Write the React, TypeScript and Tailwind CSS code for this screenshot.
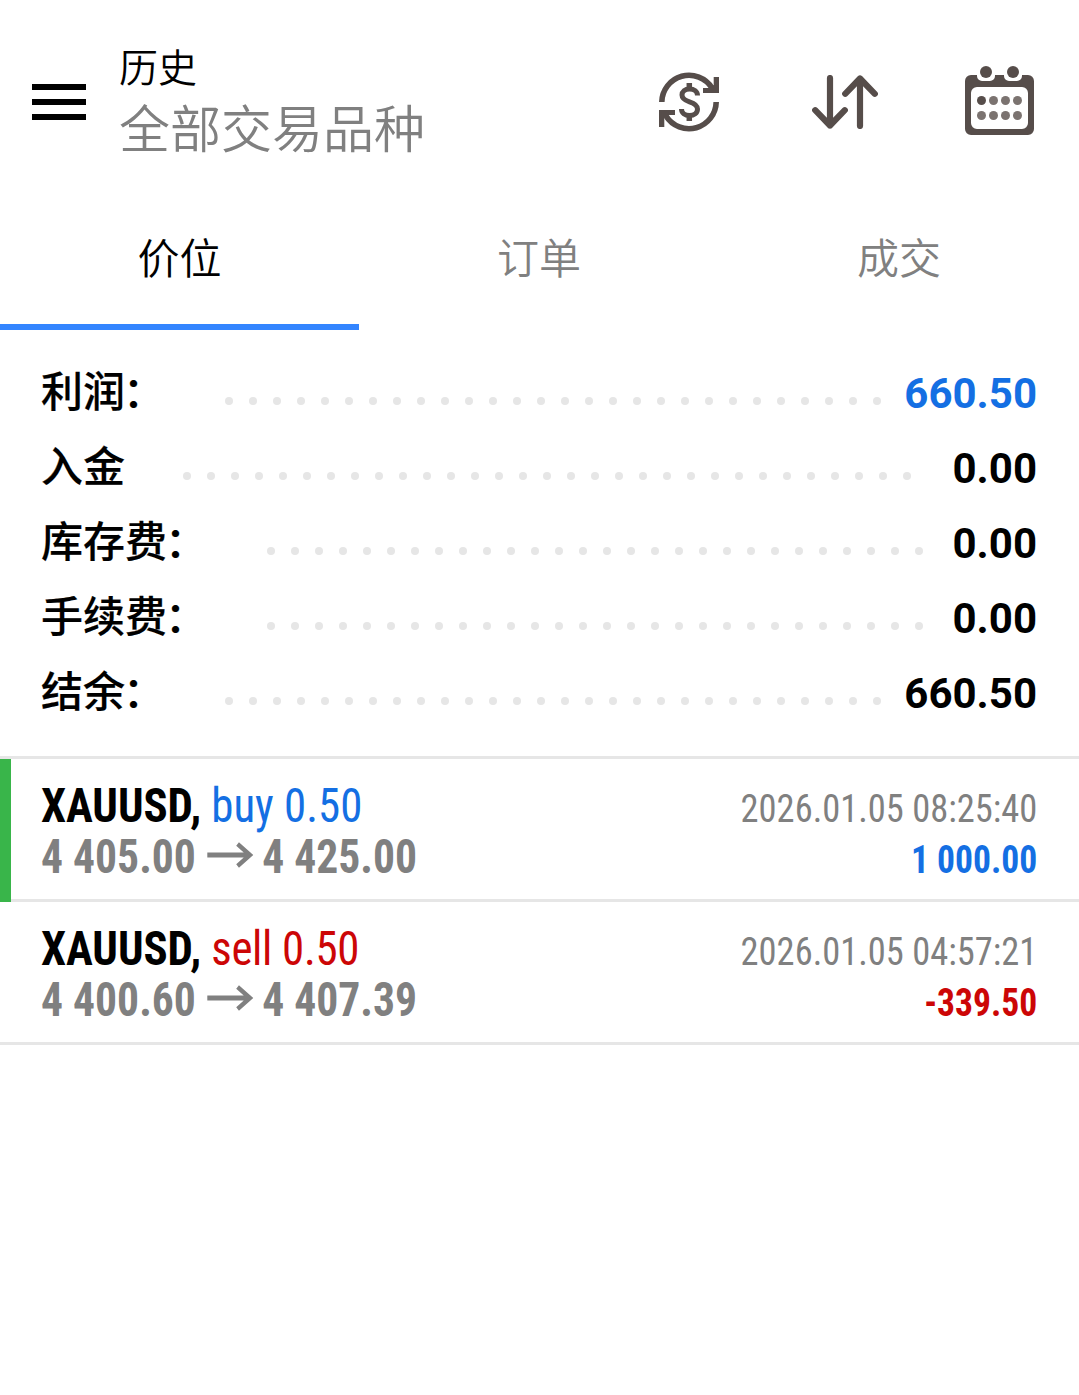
import type { ReactNode } from 'react';

interface Trade {
  id: number;
  symbol: string;
  side: 'buy' | 'sell';
  volume: string;
  open: string;
  close: string;
  time: string;
  profit: string;
  marked?: boolean;
}

const tabs = [
  { id: 'positions', label: '价位' },
  { id: 'orders', label: '订单' },
  { id: 'deals', label: '成交' },
];

const summary = [
  { label: '利润', colon: true, value: '660.50', highlight: true },
  { label: '入金', value: '0.00' },
  { label: '库存费', colon: true, value: '0.00' },
  { label: '手续费', colon: true, value: '0.00' },
  { label: '结余', colon: true, value: '660.50' },
];

const trades: Trade[] = [
  {
    id: 1,
    symbol: 'XAUUSD',
    side: 'buy',
    volume: '0.50',
    open: '4 405.00',
    close: '4 425.00',
    time: '2026.01.05 08:25:40',
    profit: '1 000.00',
    marked: true,
  },
  {
    id: 2,
    symbol: 'XAUUSD',
    side: 'sell',
    volume: '0.50',
    open: '4 400.60',
    close: '4 407.39',
    time: '2026.01.05 04:57:21',
    profit: '-339.50',
  },
];

const sideColors = {
  buy: 'text-[#146fe3]',
  sell: 'text-[#cc0606]',
};

const MenuIcon = () => (
  <svg width="54" height="36" viewBox="0 0 54 36" fill="#000">
    <path d="M0 0h54v6H0zM0 15h54v6H0zM0 30h54v6H0z" />
  </svg>
);

const CurrencyIcon = () => (
  <svg width="60" height="60" viewBox="0 0 60 60" fill="none" stroke="#564d4a">
    <path d="M2.800 30A27.200 27.200 0 0 1 53 16" strokeWidth="5.600" />
    <path d="M57.200 30A27.200 27.200 0 0 1 7 44" strokeWidth="5.600" />
    <path d="M60 5v16H44v-5h6l4.700-3V5zM0 55V38h16v5h-6l-4.700 3v9z" fill="#564d4a" stroke="none" />
    <path
      d="M38.500 23.500C38.500 19.500 35 17 30.500 17S23 19.500 23 23c0 4 3.500 5.500 7.500 6.800 4.500 1.400 8 3 8 7.200S35 43.500 30.500 43.500 22.500 41 22.500 37"
      strokeWidth="5"
    />
    <path d="M30.300 11v5M30.300 43v6" strokeWidth="5.500" />
  </svg>
);

const SortIcon = () => (
  <svg
    width="66"
    height="54"
    viewBox="0 0 66 54"
    fill="none"
    stroke="#564d4a"
    strokeWidth="6.200"
    strokeLinecap="round"
    strokeLinejoin="round"
  >
    <path d="M18 3v47.500M3.200 35.200L18 50.500l14.800-15.300" />
    <path d="M48 51V3.500M33.200 18.800L48 3.500l14.800 15.300" />
  </svg>
);

const CalendarIcon = () => (
  <svg width="69" height="69" viewBox="0 0 69 69" fill="#564d4a">
    <path
      fillRule="evenodd"
      d="M6 9h6v1a5 5 0 0 0 5 5h8a5 5 0 0 0 5-5V9h9v1a5 5 0 0 0 5 5h8a5 5 0 0 0 5-5V9h6a6 6 0 0 1 6 6v48a6 6 0 0 1-6 6H6a6 6 0 0 1-6-6V15a6 6 0 0 1 6-6zM12 21a6 6 0 0 0-6 6v30a6 6 0 0 0 6 6h45a6 6 0 0 0 6-6V27a6 6 0 0 0-6-6z"
    />
    <circle cx="21" cy="6" r="6" />
    <circle cx="48" cy="6" r="6" />
    <circle cx="16.500" cy="34.500" r="4.500" />
    <g fill="#7b7370">
      <circle cx="28.500" cy="34.500" r="4.500" />
      <circle cx="40.500" cy="34.500" r="4.500" />
      <circle cx="52.500" cy="34.500" r="4.500" />
      <circle cx="16.500" cy="49.500" r="4.500" />
      <circle cx="28.500" cy="49.500" r="4.500" />
      <circle cx="40.500" cy="49.500" r="4.500" />
      <circle cx="52.500" cy="49.500" r="4.500" />
    </g>
  </svg>
);

const ArrowIcon = () => (
  <svg className="mr-2.5 mb-1 ml-3" width="51" height="26" viewBox="0 0 51 26" fill="none" stroke="#808080" strokeWidth="4.800">
    <path d="M0 13h48M33.500 2L47 13 33.500 24" />
  </svg>
);

const IconButton = ({ label, children }: { label: string; children: ReactNode }) => (
  <button aria-label={label} className="block">
    {children}
  </button>
);

// Only whole dots are shown, the ones that do not fit wrap out of sight
const DotLeader = () => (
  <div className="mt-4 mr-[23px] ml-[57px] flex h-2 flex-1 flex-wrap gap-4 overflow-hidden">
    {Array.from({ length: 34 }, (_, i) => (
      <span key={i} className="size-2 rounded-full bg-[#e6e6e6]" />
    ))}
  </div>
);

const TradeRow = ({ trade }: { trade: Trade }) => (
  <li className="flex h-[143px]">
    <div className={`w-[11px] ${trade.marked ? 'bg-[#39b54a]' : 'border-b-[3px] border-[#e6e6e6]'}`} />
    <div className="flex flex-1 justify-between border-b-[3px] border-[#e6e6e6] pt-[21px] pr-[42px] pl-[30px] font-['Roboto',sans-serif] font-stretch-condensed">
      <div className="text-[48px] leading-[51px]">
        <p className="origin-left scale-x-[0.935] whitespace-pre">
          <span className="font-bold tracking-[-0.1px]">{trade.symbol}, </span>
          <span className={`${trade.side === 'sell' ? 'tracking-[-0.35px]' : ''} ${sideColors[trade.side]}`}>
            {trade.side} {trade.volume}
          </span>
        </p>
        <p className="flex origin-left scale-x-[0.908] items-center font-bold text-[#808080]">
          {trade.open}
          <ArrowIcon />
          {trade.close}
        </p>
      </div>
      <div className="pt-1 text-right text-[39px] leading-[51px]">
        <p className="origin-right scale-x-[0.935] text-[#808080]">{trade.time}</p>
        <p className={`origin-right scale-x-[0.912] font-bold ${sideColors[trade.side]}`}>
          {trade.profit}
        </p>
      </div>
    </div>
  </li>
);

const App = () => {
  return (
    <div className="h-[1395px] w-[1079px] overflow-hidden bg-white font-['Roboto','Noto_Sans_CJK_SC',sans-serif] text-black">
      <header className="flex h-[204px] items-center pr-[45px] pl-8">
        <IconButton label="菜单">
          <MenuIcon />
        </IconButton>
        <div className="ml-[33px] flex-1 pb-2 font-['Noto_Sans_CJK_SC',sans-serif] font-[350]">
          <h1 className="text-[39px] leading-[56px]">历史</h1>
          <p className="text-[51px] leading-[66px] text-[#808080]">全部交易品种</p>
        </div>
        <div className="flex items-center">
          <IconButton label="货币">
            <CurrencyIcon />
          </IconButton>
          <div className="mr-[87px] ml-[93px]">
            <IconButton label="排序">
              <SortIcon />
            </IconButton>
          </div>
          <div className="mb-[3px]">
            <IconButton label="日期">
              <CalendarIcon />
            </IconButton>
          </div>
        </div>
      </header>

      <nav className="grid h-[126px] grid-cols-[359px_1fr_1fr] font-['Noto_Sans_CJK_SC',sans-serif] font-[350]">
        {tabs.map(({ id, label }, index) => (
          <button
            key={id}
            className={`border-b-[6px] pb-[17px] text-[42px] ${
              index === 0 ? 'border-[#3385ff]' : 'border-transparent text-[#808080]'
            }`}
          >
            {label}
          </button>
        ))}
      </nav>

      <section className="pt-[25px] pr-[42px] pb-[26px] pl-[41px] text-[42px]">
        {summary.map(({ label, colon, value, highlight }) => (
          <div key={label} className="flex h-[75px] items-center">
            <span className="mr-px font-medium [-webkit-text-stroke:0.2px_black]">
              {label}
              {colon && <span className="mr-0.5 -ml-0.5 inline-block">：</span>}
            </span>
            <DotLeader />
            <span className={`pt-0.5 font-bold ${highlight ? 'text-[#146fe3]' : ''}`}>{value}</span>
          </div>
        ))}
      </section>

      <ul className="border-t-[3px] border-[#e6e6e6]">
        {trades.map((trade) => (
          <TradeRow key={trade.id} trade={trade} />
        ))}
      </ul>
    </div>
  );
};

export default App;
